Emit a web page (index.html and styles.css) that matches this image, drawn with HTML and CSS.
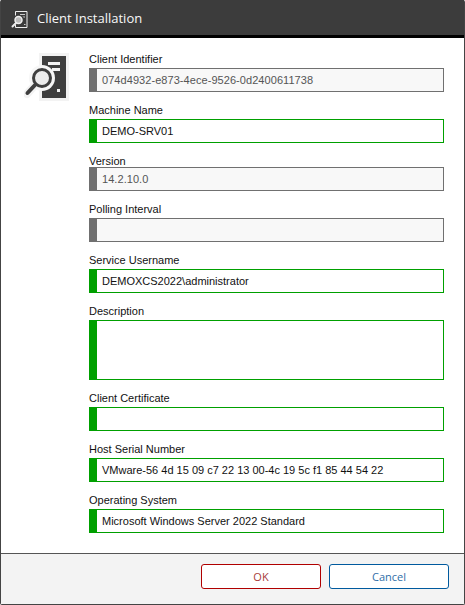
FILE: index.html
```html
<!DOCTYPE html>
<html lang="en">
<head>
  <meta charset="UTF-8" />
  <title>Client Installation</title>
  <link rel="stylesheet" href="styles.css">
</head>
<body>
  <div class="dialog">
    <div class="titlebar">
      <svg class="title-icon" width="22" height="22" viewBox="0 0 22 22">
        <path d="M4.500 4.500h11.500v16H4.500z" fill="none" stroke="#eee" stroke-width="1"/>
        <path d="M9 7.500h5M11 10h3M13 17.500h1.500" stroke="#ccc" stroke-width="1"/>
        <circle cx="7.500" cy="13" r="5.500" fill="#3c3c3c"/>
        <circle cx="7.500" cy="13" r="3.500" fill="#bbb" stroke="#f0f0f0" stroke-width="1.500"/>
        <path d="M5 16L1.500 19.500" stroke="#eee" stroke-width="2" stroke-linecap="round"/>
      </svg>
      <span class="title-text">Client Installation</span>
    </div>

    <div class="content">
      <div class="side-icon">
        <svg width="46" height="50" viewBox="0 0 46 50">
          <rect x="15" y="1" width="30" height="48" fill="#f3f3f3"/>
          <rect x="18" y="4" width="24" height="42" fill="#3f3f3f"/>
          <rect x="24" y="10" width="12" height="3" fill="#f3f3f3"/>
          <rect x="28" y="16" width="8" height="3" fill="#f3f3f3"/>
          <rect x="33" y="37" width="3" height="3" fill="#f3f3f3"/>
          <circle cx="18" cy="26" r="13" fill="#f7f7f7"/>
          <path d="M11 33L3 42" stroke="#f3f3f3" stroke-width="8" stroke-linecap="round"/>
          <circle cx="18" cy="26" r="8.500" fill="#ececec" stroke="#3f3f3f" stroke-width="3"/>
          <path d="M11 33L3.500 41" stroke="#3f3f3f" stroke-width="4" stroke-linecap="round"/>
        </svg>
      </div>

      <div class="fields">
        <div class="field">
          <label>Client Identifier</label>
          <div class="input readonly">074d4932-e873-4ece-9526-0d2400611738</div>
        </div>
        <div class="field">
          <label>Machine Name</label>
          <div class="input">DEMO-SRV01</div>
        </div>
        <div class="field field-tight">
          <label>Version</label>
          <div class="input readonly">14.2.10.0</div>
        </div>
        <div class="field">
          <label>Polling Interval</label>
          <div class="input readonly"></div>
        </div>
        <div class="field">
          <label>Service Username</label>
          <div class="input">DEMOXCS2022\administrator</div>
        </div>
        <div class="field">
          <label>Description</label>
          <div class="input tall"></div>
        </div>
        <div class="field">
          <label>Client Certificate</label>
          <div class="input"></div>
        </div>
        <div class="field">
          <label>Host Serial Number</label>
          <div class="input">VMware-56 4d 15 09 c7 22 13 00-4c 19 5c f1 85 44 54 22</div>
        </div>
        <div class="field">
          <label>Operating System</label>
          <div class="input">Microsoft Windows Server 2022 Standard</div>
        </div>
      </div>
    </div>

    <div class="footer">
      <button class="btn btn-ok">OK</button>
      <button class="btn btn-cancel">Cancel</button>
    </div>
  </div>
</body>
</html>
```

FILE: styles.css
```css
html, body {
  margin: 0;
  padding: 0;
}

body {
  width: 465px;
  height: 605px;
  overflow: hidden;
  font-family: "Liberation Sans", Arial, sans-serif;
  font-size: 11px;
  color: #111;
  background: #fff;
}

.dialog {
  width: 465px;
  height: 605px;
  box-sizing: border-box;
  border: 1px solid #444;
  border-top: 0;
  border-radius: 2px;
  display: flex;
  flex-direction: column;
}

.titlebar {
  height: 35px;
  flex: none;
  background: #3c3c3c;
  border-bottom: 3px solid #000;
  display: flex;
  align-items: center;
  padding-left: 10px;
  gap: 4px;
}

.title-text {
  font-family: "Open Sans", sans-serif;
  font-size: 13px;
  color: #f8f8f8;
  padding-top: 1px;
}

.content {
  flex: 1;
  display: flex;
  padding: 12px 20px 0 23px;
}

.side-icon {
  width: 65px;
  flex: none;
  padding-top: 2px;
}

.fields {
  flex: 1;
  display: flex;
  flex-direction: column;
  gap: 9px;
}

.field label {
  display: block;
  height: 18px;
  line-height: 18px;
}

.field-tight label {
  height: 15px;
}

.input {
  height: 24px;
  box-sizing: border-box;
  border: 1px solid #00a000;
  border-left: 8px solid #00a000;
  padding-left: 5px;
  line-height: 22px;
  background: #fff;
  color: #111;
}

.input.tall {
  height: 60px;
}

.input.readonly {
  border-color: #707070;
  background: #f8f8f8;
  color: #555;
  letter-spacing: 0.06px;
}

.footer {
  height: 51px;
  flex: none;
  box-sizing: border-box;
  background: #f3f3f3;
  border-top: 1px solid #555;
  display: flex;
  justify-content: flex-end;
  align-items: flex-start;
  gap: 8px;
  padding: 10px 15px 0 0;
}

.btn {
  width: 120px;
  height: 25px;
  background: #fff;
  border-radius: 3px;
  font-family: "Open Sans", sans-serif;
  font-size: 11px;
  padding: 0;
}

.btn-ok {
  border: 1px solid #b00000;
  color: #a83a3a;
}

.btn-cancel {
  border: 1px solid #005a9e;
  color: #2f6ea8;
}
```
